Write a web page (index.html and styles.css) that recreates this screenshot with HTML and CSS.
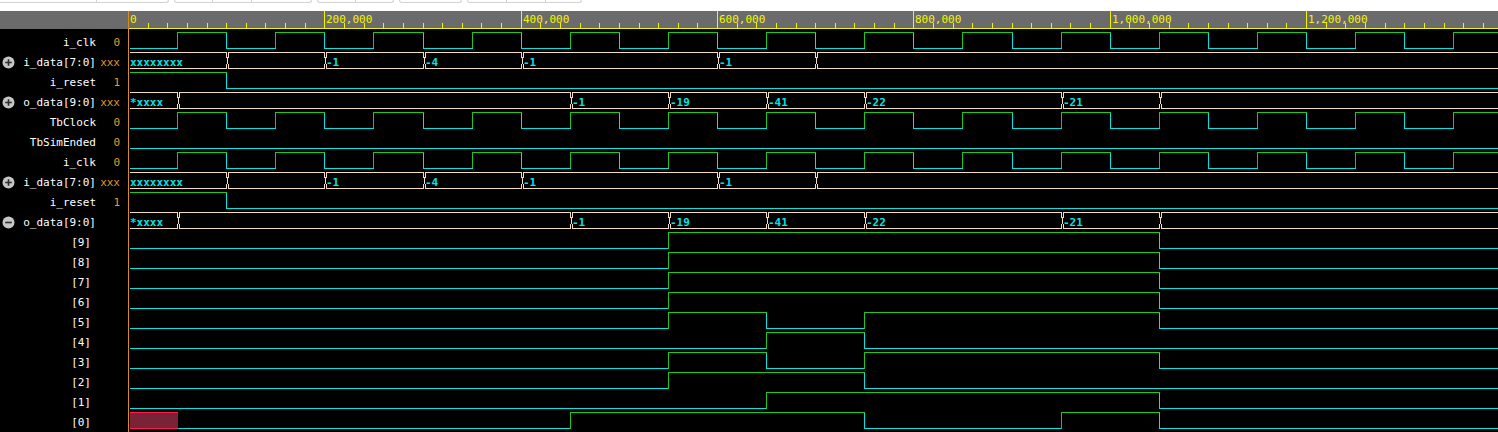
FILE: index.html
```html
<!DOCTYPE html>
<html>
<head>
<meta charset="utf-8">
<title>Waveform</title>
<link rel="stylesheet" href="styles.css">
</head>
<body>
<div class="toolbar">
  <div class="tb-group g1"><span class="tb-btn s99"></span><span class="tb-btn s72"></span></div>
  <div class="tb-group"><span class="tb-btn s37"></span><span class="tb-btn s39"></span><span class="tb-btn s60"></span></div>
  <div class="tb-group"><span class="tb-btn s37"></span><span class="tb-btn s38"></span></div>
  <div class="tb-group"><span class="tb-btn s61"></span></div>
  <div class="tb-group"><span class="tb-btn s38"></span><span class="tb-btn s39"></span><span class="tb-btn s36"></span></div>
</div>
<div class="viewer">
  <div class="left">
    <div class="ruler-left"></div>
    <div class="names">
      <div class="row"><span class="ico"></span><span class="name">i_clk</span><span class="val">0</span></div>
      <div class="row"><span class="ico"><svg class="tog" viewBox="0 0 13 13"><circle cx="6.5" cy="6.5" r="6"/><path d="M3.2 6.5h6.6M6.5 3.2v6.6"/></svg></span><span class="name">i_data[7:0]</span><span class="val">xxx</span></div>
      <div class="row"><span class="ico"></span><span class="name">i_reset</span><span class="val">1</span></div>
      <div class="row"><span class="ico"><svg class="tog" viewBox="0 0 13 13"><circle cx="6.5" cy="6.5" r="6"/><path d="M3.2 6.5h6.6M6.5 3.2v6.6"/></svg></span><span class="name">o_data[9:0]</span><span class="val">xxx</span></div>
      <div class="row"><span class="ico"></span><span class="name">TbClock</span><span class="val">0</span></div>
      <div class="row"><span class="ico"></span><span class="name">TbSimEnded</span><span class="val">0</span></div>
      <div class="row"><span class="ico"></span><span class="name">i_clk</span><span class="val">0</span></div>
      <div class="row"><span class="ico"><svg class="tog" viewBox="0 0 13 13"><circle cx="6.5" cy="6.5" r="6"/><path d="M3.2 6.5h6.6M6.5 3.2v6.6"/></svg></span><span class="name">i_data[7:0]</span><span class="val">xxx</span></div>
      <div class="row"><span class="ico"></span><span class="name">i_reset</span><span class="val">1</span></div>
      <div class="row"><span class="ico"><svg class="tog" viewBox="0 0 13 13"><circle cx="6.5" cy="6.5" r="6"/><path d="M3.2 6.5h6.6"/></svg></span><span class="name">o_data[9:0]</span><span class="val"></span></div>
      <div class="row"><span class="ico"></span><span class="name bit">[9]</span><span class="val"></span></div>
      <div class="row"><span class="ico"></span><span class="name bit">[8]</span><span class="val"></span></div>
      <div class="row"><span class="ico"></span><span class="name bit">[7]</span><span class="val"></span></div>
      <div class="row"><span class="ico"></span><span class="name bit">[6]</span><span class="val"></span></div>
      <div class="row"><span class="ico"></span><span class="name bit">[5]</span><span class="val"></span></div>
      <div class="row"><span class="ico"></span><span class="name bit">[4]</span><span class="val"></span></div>
      <div class="row"><span class="ico"></span><span class="name bit">[3]</span><span class="val"></span></div>
      <div class="row"><span class="ico"></span><span class="name bit">[2]</span><span class="val"></span></div>
      <div class="row"><span class="ico"></span><span class="name bit">[1]</span><span class="val"></span></div>
      <div class="row"><span class="ico"></span><span class="name bit">[0]</span><span class="val"></span></div>
    </div>
  </div>
  <div class="right">
    <svg class="ruler" width="1369" height="21" viewBox="129 11 1369 21" shape-rendering="crispEdges">
      <rect class="rl-bg" x="129" y="11" width="1369" height="17"/>
      <path class="rl-line" d="M129 28.5H1498"/>
      <path class="rl-tick" d="M324.5 11V28M521.5 11V28M717.5 11V28M913.5 11V28M1110.5 11V28M1306.5 11V28"/>
      <path class="rl-tick" d="M148.5 23V28M167.5 23V28M187.5 23V28M207.5 23V28M226.5 23V28M246.5 23V28M265.5 23V28M285.5 23V28M305.5 23V28M344.5 23V28M364.5 23V28M383.5 23V28M403.5 23V28M423.5 23V28M442.5 23V28M462.5 23V28M481.5 23V28M501.5 23V28M540.5 23V28M560.5 23V28M580.5 23V28M599.5 23V28M619.5 23V28M639.5 23V28M658.5 23V28M678.5 23V28M697.5 23V28M737.5 23V28M756.5 23V28M776.5 23V28M796.5 23V28M815.5 23V28M835.5 23V28M854.5 23V28M874.5 23V28M894.5 23V28M933.5 23V28M953.5 23V28M972.5 23V28M992.5 23V28M1012.5 23V28M1031.5 23V28M1051.5 23V28M1070.5 23V28M1090.5 23V28M1129.5 23V28M1149.5 23V28M1169.5 23V28M1188.5 23V28M1208.5 23V28M1228.5 23V28M1247.5 23V28M1267.5 23V28M1286.5 23V28M1326.5 23V28M1345.5 23V28M1365.5 23V28M1385.5 23V28M1404.5 23V28M1424.5 23V28M1444.5 23V28M1463.5 23V28M1483.5 23V28"/>
      <text class="rl-text" x="130" y="23">0</text>
      <text class="rl-text" x="326" y="23">200,000</text>
      <text class="rl-text" x="523" y="23">400,000</text>
      <text class="rl-text" x="719" y="23">600,000</text>
      <text class="rl-text" x="915" y="23">800,000</text>
      <text class="rl-text" x="1112" y="23">1,000,000</text>
      <text class="rl-text" x="1308" y="23">1,200,000</text>
    </svg>
    <svg class="waves" width="1369" height="400" viewBox="129 32 1369 400" shape-rendering="crispEdges">
      <defs>
        <g id="tx">
          <rect class="gap" x="1" y="0" width="1" height="5"/>
          <rect class="gap" x="1" y="12" width="1" height="5"/>
          <path class="bus" d="M0.5 0V5.5M2.5 0V5.5M1.5 5V12M0.5 11.5V17M2.5 11.5V17"/>
        </g>
        <g id="clk">
          <path class="hi" d="M177.5 16.5V.5H226.5M275.5 16.5V.5H324.5M373.5 16.5V.5H423.5M472.5 16.5V.5H521.5M570.5 16.5V.5H619.5M668.5 16.5V.5H717.5M766.5 16.5V.5H815.5M864.5 16.5V.5H913.5M962.5 16.5V.5H1012.5M1061.5 16.5V.5H1110.5M1159.5 16.5V.5H1208.5M1257.5 16.5V.5H1306.5M1355.5 16.5V.5H1404.5M1453.5 16.5V.5H1498"/>
          <path class="lo" d="M130 16.5H177.5M226.5 .5V16.5H275.5M324.5 .5V16.5H373.5M423.5 .5V16.5H472.5M521.5 .5V16.5H570.5M619.5 .5V16.5H668.5M717.5 .5V16.5H766.5M815.5 .5V16.5H864.5M913.5 .5V16.5H962.5M1012.5 .5V16.5H1061.5M1110.5 .5V16.5H1159.5M1208.5 .5V16.5H1257.5M1306.5 .5V16.5H1355.5M1404.5 .5V16.5H1453.5"/>
        </g>
        <g id="idata">
          <path class="bus" d="M130 .5H1498M130 16.5H1498"/>
          <use href="#tx" x="226"/>
          <use href="#tx" x="324"/>
          <use href="#tx" x="423"/>
          <use href="#tx" x="521"/>
          <use href="#tx" x="717"/>
          <use href="#tx" x="815"/>
          <text class="bv" x="130" y="14">xxxxxxxx</text>
          <text class="bv" x="326" y="14">-1</text>
          <text class="bv" x="425" y="14">-4</text>
          <text class="bv" x="523" y="14">-1</text>
          <text class="bv" x="719" y="14">-1</text>
        </g>
        <g id="rst">
          <path class="hi" d="M130 .5H226.5"/>
          <path class="lo" d="M226.5 .5V16.5H1498"/>
        </g>
        <g id="odata">
          <path class="bus" d="M130 .5H1498M130 16.5H1498"/>
          <use href="#tx" x="177"/>
          <use href="#tx" x="570"/>
          <use href="#tx" x="668"/>
          <use href="#tx" x="766"/>
          <use href="#tx" x="864"/>
          <use href="#tx" x="1061"/>
          <use href="#tx" x="1159"/>
          <text class="bv" x="130" y="14">*xxxx</text>
          <text class="bv" x="572" y="14">-1</text>
          <text class="bv" x="670" y="14">-19</text>
          <text class="bv" x="768" y="14">-41</text>
          <text class="bv" x="866" y="14">-22</text>
          <text class="bv" x="1063" y="14">-21</text>
        </g>
        <g id="b9">
          <path class="lo" d="M130 16.5H668.5"/>
          <path class="hi" d="M668.5 16.5V.5H1159.5"/>
          <path class="lo" d="M1159.5 .5V16.5H1498"/>
        </g>
        <g id="b5">
          <path class="lo" d="M130 16.5H668.5M766.5 .5V16.5H864.5M1159.5 .5V16.5H1498"/>
          <path class="hi" d="M668.5 16.5V.5H766.5M864.5 16.5V.5H1159.5"/>
        </g>
      </defs>
      <use href="#clk" y="32"/>
      <use href="#idata" y="52"/>
      <use href="#rst" y="72"/>
      <use href="#odata" y="92"/>
      <use href="#clk" y="112"/>
      <path class="lo" d="M130 148.5H1498"/>
      <use href="#clk" y="152"/>
      <use href="#idata" y="172"/>
      <use href="#rst" y="192"/>
      <use href="#odata" y="212"/>
      <use href="#b9" y="232"/>
      <use href="#b9" y="252"/>
      <use href="#b9" y="272"/>
      <use href="#b9" y="292"/>
      <use href="#b5" y="312"/>
      <g transform="translate(0 332)">
        <path class="lo" d="M130 16.5H766.5M864.5 .5V16.5H1498"/>
        <path class="hi" d="M766.5 16.5V.5H864.5"/>
      </g>
      <use href="#b5" y="352"/>
      <g transform="translate(0 372)">
        <path class="lo" d="M130 16.5H668.5M864.5 .5V16.5H1498"/>
        <path class="hi" d="M668.5 16.5V.5H864.5"/>
      </g>
      <g transform="translate(0 392)">
        <path class="lo" d="M130 16.5H766.5M1159.5 .5V16.5H1498"/>
        <path class="hi" d="M766.5 16.5V.5H1159.5"/>
      </g>
      <g transform="translate(0 412)">
        <rect class="xfill" x="130" y="0" width="48" height="17"/>
        <path class="xline" d="M130 .5H178M130 16.5H178"/>
        <path class="lo" d="M178 16.5H570.5M864.5 .5V16.5H1061.5M1159.5 .5V16.5H1498"/>
        <path class="hi" d="M570.5 16.5V.5H864.5M1061.5 16.5V.5H1159.5"/>
      </g>
    </svg>
  </div>
</div>
</body>
</html>
```
FILE: styles.css
```css
html, body {
  margin: 0;
  padding: 0;
  background: #000;
  overflow: hidden;
}

body {
  width: 1498px;
  height: 432px;
  font-family: "DejaVu Sans Mono", "Liberation Mono", monospace;
  font-size: 11px;
}

/* top toolbar (only the bottom edge of the buttons is visible) */
.toolbar {
  height: 11px;
  background: #fff;
  display: flex;
  gap: 5px;
  overflow: hidden;
}

.tb-group {
  display: flex;
  height: 2px;
  border: 1px solid #d2d2d2;
  border-top: 0;
  border-radius: 0 0 4px 4px;
}

.tb-group.g1 {
  margin-left: -4px;
}

.tb-btn {
  box-sizing: border-box;
  height: 2px;
}

.tb-btn + .tb-btn {
  border-left: 1px solid #d2d2d2;
}

.s36 { width: 36px; }
.s37 { width: 37px; }
.s38 { width: 38px; }
.s39 { width: 39px; }
.s60 { width: 60px; }
.s61 { width: 61px; }
.s72 { width: 72px; }
.s99 { width: 99px; }

/* viewer */
.viewer {
  display: flex;
  height: 421px;
  background: #000;
}

.left {
  width: 128px;
  flex: none;
  border-right: 1px solid #d98b22;
}

.ruler-left {
  height: 18px;
  margin-bottom: 3px;
  background: #6b6b6b;
}

.names {
  display: flex;
  flex-direction: column;
}

.row {
  display: flex;
  align-items: center;
  height: 20px;
  box-sizing: border-box;
  padding-top: 1px;
  line-height: 19px;
  color: #fff;
  white-space: nowrap;
}

.ico {
  width: 20px;
  flex: none;
  display: flex;
  align-items: center;
  padding-left: 2px;
  box-sizing: border-box;
}

.tog {
  width: 13px;
  height: 13px;
  display: block;
}

.tog circle {
  fill: #c6c6c6;
}

.tog path {
  stroke: #2c2c2c;
  stroke-width: 1.6;
  fill: none;
}

.name {
  flex: 1;
  text-align: right;
}

.name.bit {
  padding-right: 5px;
}

.val {
  width: 32px;
  flex: none;
  box-sizing: border-box;
  padding-right: 8px;
  text-align: right;
  color: #e39c2f;
}

.right {
  flex: 1;
  display: flex;
  flex-direction: column;
  overflow: hidden;
}

.ruler,
.waves {
  display: block;
  flex: none;
}

.rl-bg {
  fill: #6b6b6b;
}

.rl-line,
.rl-tick {
  stroke: #f4f400;
  stroke-width: 1;
  fill: none;
}

.rl-text {
  fill: #f4f400;
  font-family: "DejaVu Sans Mono", monospace;
  font-size: 11px;
}

.hi {
  stroke: #22c622;
  stroke-width: 1;
  fill: none;
}

.lo {
  stroke: #00e4e4;
  stroke-width: 1;
  fill: none;
}

.bus {
  stroke: #f4dcbf;
  stroke-width: 1;
  fill: none;
}

.gap {
  fill: #000;
}

.bv {
  fill: #00e4e4;
  font-family: "DejaVu Sans Mono", monospace;
  font-size: 11px;
  font-weight: bold;
}

.xfill {
  fill: #7a2236;
}

.xline {
  stroke: #ff1c4c;
  stroke-width: 1;
  fill: none;
}
```
